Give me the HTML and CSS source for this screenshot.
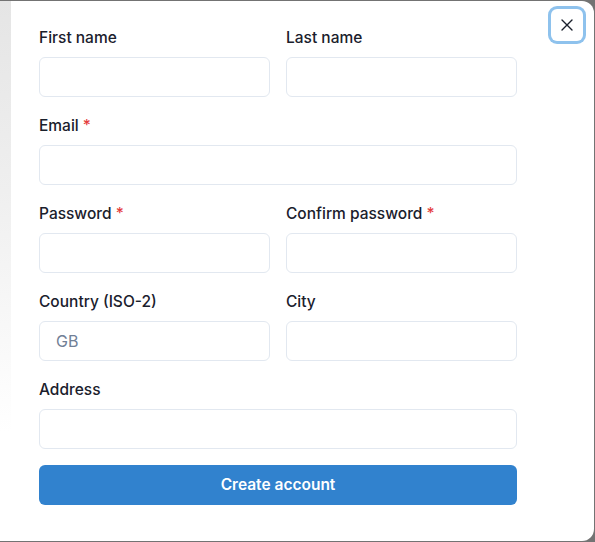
FILE: index.html
```html
<!DOCTYPE html>
<html lang="en">
<head>
<meta charset="utf-8">
<title>Create account</title>
<link rel="stylesheet" href="styles.css">
</head>
<body>
  <div class="modal">
    <div class="edge"></div>
    <div class="body">
      <form class="form">
        <div class="field">
          <label class="label" for="fn">First name</label>
          <input class="input" id="fn" type="text">
        </div>
        <div class="field">
          <label class="label" for="ln">Last name</label>
          <input class="input" id="ln" type="text">
        </div>
        <div class="field wide">
          <label class="label" for="em">Email<span class="req">*</span></label>
          <input class="input" id="em" type="email">
        </div>
        <div class="field">
          <label class="label" for="pw">Password<span class="req">*</span></label>
          <input class="input" id="pw" type="password">
        </div>
        <div class="field">
          <label class="label" for="pw2">Confirm password<span class="req">*</span></label>
          <input class="input" id="pw2" type="password">
        </div>
        <div class="field">
          <label class="label" for="co">Country (ISO-2)</label>
          <input class="input" id="co" type="text" placeholder="GB">
        </div>
        <div class="field">
          <label class="label" for="ci">City</label>
          <input class="input" id="ci" type="text">
        </div>
        <div class="field wide">
          <label class="label" for="ad">Address</label>
          <input class="input" id="ad" type="text">
        </div>
        <button class="submit wide" type="button">Create account</button>
      </form>
    </div>
    <button class="close" type="button" aria-label="Close">
      <svg width="12" height="12" viewBox="0 0 12 12" aria-hidden="true">
        <path d="M1 1 L11 11 M11 1 L1 11" stroke="#1a202c" stroke-width="1.4" stroke-linecap="round" fill="none"/>
      </svg>
    </button>
  </div>
</body>
</html>
```

FILE: styles.css
```css
* { box-sizing: border-box; }

html, body {
  margin: 0;
  padding: 0;
}

body {
  background: #737373;
  padding: 1px 1px 1px 0;
  height: 542px;
  font-family: Inter, "Noto Sans", "Liberation Sans", sans-serif;
  color: #1a202c;
}

.modal {
  position: relative;
  display: flex;
  height: 540px;
  background: #ffffff;
  border-radius: 0 12px 12px 0;
}

.edge {
  width: 11px;
  flex: none;
  background: linear-gradient(to bottom, #e5e5e5 0%, #efefef 35%, #f8f8f8 60%, #ffffff 80%);
}

.body {
  padding: 24px 0 0 28px;
}

.form {
  width: 478px;
  display: grid;
  grid-template-columns: minmax(0, 1fr) minmax(0, 1fr);
  column-gap: 16px;
  row-gap: 16px;
}

.field {
  display: flex;
  flex-direction: column;
  min-width: 0;
}

.wide {
  grid-column: 1 / -1;
}

.label {
  font-size: 15.5px;
  font-weight: 500;
  line-height: 23px;
  padding-top: 1px;
  margin-bottom: 8px;
  color: #1a202c;
}

.req {
  color: #e53e3e;
  margin-left: 4px;
}

.input {
  width: 100%;
  min-width: 0;
  height: 40px;
  border: 1px solid #e2e8f0;
  border-radius: 6px;
  padding: 0 16px;
  font-family: inherit;
  font-size: 16px;
  color: #1a202c;
  background: #fff;
  outline: none;
}

.input::placeholder {
  color: #718096;
}

.submit {
  height: 40px;
  border: none;
  border-radius: 6px;
  background: #3182ce;
  color: #ffffff;
  font-family: inherit;
  font-size: 15.5px;
  font-weight: 600;
  padding: 0 0 2px;
}

.close {
  position: absolute;
  top: 8px;
  right: 11px;
  width: 32px;
  height: 32px;
  border: none;
  border-radius: 6px;
  background: #fff;
  display: flex;
  align-items: center;
  justify-content: center;
  padding: 0;
  box-shadow: 0 0 0 3px rgba(66, 153, 225, 0.6);
}
```
